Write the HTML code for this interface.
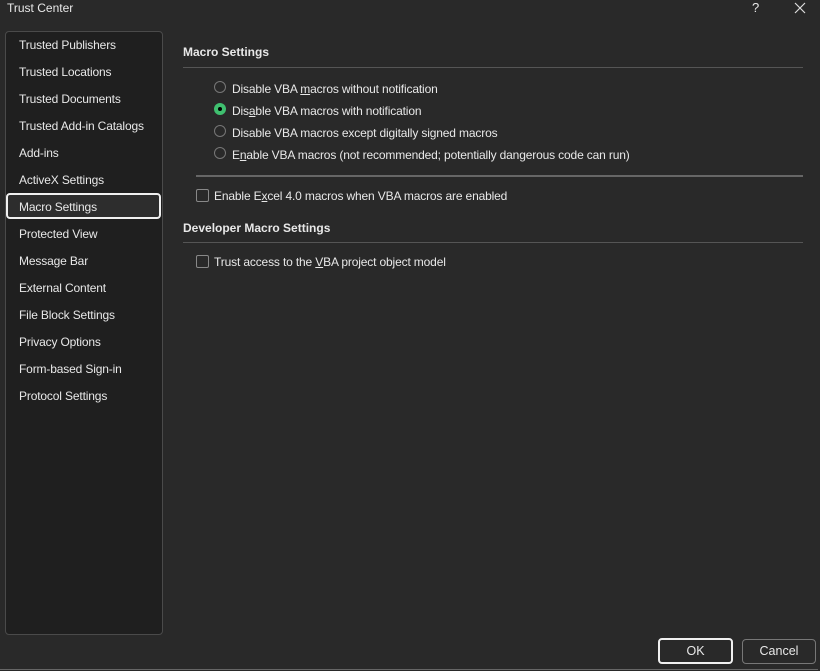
<!DOCTYPE html><html><head><style>
body{margin:0;width:820px;height:671px;background:#292929;font-family:"Liberation Sans",sans-serif;font-size:12px;color:#e8e8e8;position:relative;overflow:hidden}
.a{position:absolute;white-space:nowrap}
.m{letter-spacing:-0.15px}
.list{position:absolute;left:5px;top:31px;width:156px;height:602px;background:#1f1f1f;border:1px solid #4a4a4a;border-radius:4px}
.sel{position:absolute;left:6px;top:193px;width:151px;height:22px;border:2px solid #f0f0f0;border-radius:4px;background:#2d2d2d}
.hr{position:absolute;height:1px;background:#555}
.rad{position:absolute;width:10px;height:10px;border:1px solid #777;border-radius:50%}
.chk{position:absolute;width:11px;height:11px;border:1px solid #888;border-radius:2px}
.btn{position:absolute;top:638px;height:22px;border-radius:4px;text-align:center;line-height:22px;font-size:12.5px}
b{font-weight:bold}
</style></head><body>
<div class="a" style="left:7px;top:1px">Trust Center</div>
<div class="a" style="left:752px;top:0px;font-size:13px">?</div>
<svg class="a" style="left:794px;top:2px" width="12" height="12"><path d="M1 1L11 11M11 1L1 11" stroke="#ddd" stroke-width="1.2"/></svg>
<div class="list" style="z-index:-1"></div>
<div class="sel"></div>
<div class="a m" style="left:19px;top:39px;line-height:13px">
<div style="height:27px">Trusted Publishers</div><div style="height:27px">Trusted Locations</div><div style="height:27px">Trusted Documents</div><div style="height:27px">Trusted Add-in Catalogs</div><div style="height:27px">Add-ins</div><div style="height:27px">ActiveX Settings</div><div style="height:27px">Macro Settings</div><div style="height:27px">Protected View</div><div style="height:27px">Message Bar</div><div style="height:27px">External Content</div><div style="height:27px">File Block Settings</div><div style="height:27px">Privacy Options</div><div style="height:27px">Form-based Sign-in</div><div style="height:27px">Protocol Settings</div></div>
<div class="a" style="left:183px;top:45px"><b>Macro Settings</b></div>
<div class="hr" style="left:183px;top:67px;width:620px"></div>
<div class="rad" style="left:214px;top:81px"></div>
<div class="a m" style="left:232px;top:82px">Disable VBA <u>m</u>acros without notification</div>
<div class="rad" style="left:214px;top:103px;border:none;background:#3fbf6f;width:12px;height:12px"></div>
<div class="a" style="left:218px;top:107px;width:4px;height:4px;border-radius:50%;background:#000"></div>
<div class="a m" style="left:232px;top:104px">Dis<u>a</u>ble VBA macros with notification</div>
<div class="rad" style="left:214px;top:125px"></div>
<div class="a m" style="left:232px;top:126px">Disable VBA macros except digitally signed macros</div>
<div class="rad" style="left:214px;top:147px"></div>
<div class="a m" style="left:232px;top:148px">E<u>n</u>able VBA macros (not recommended; potentially dangerous code can run)</div>
<div class="hr" style="left:196px;top:175px;width:607px;height:2px;background:#666"></div>
<div class="chk" style="left:196px;top:189px"></div>
<div class="a m" style="left:214px;top:189px">Enable E<u>x</u>cel 4.0 macros when VBA macros are enabled</div>
<div class="a" style="left:183px;top:221px"><b>Developer Macro Settings</b></div>
<div class="hr" style="left:183px;top:242px;width:620px"></div>
<div class="chk" style="left:196px;top:255px"></div>
<div class="a m" style="left:214px;top:255px">Trust access to the <u>V</u>BA project object model</div>
<div class="btn" style="left:658px;width:71px;border:2px solid #f0f0f0">OK</div>
<div class="btn" style="left:742px;width:72px;border:1px solid #777;top:639px;height:23px">Cancel</div>
<div class="a" style="left:0;top:669px;width:818px;height:1px;background:#666"></div>
</body></html>
